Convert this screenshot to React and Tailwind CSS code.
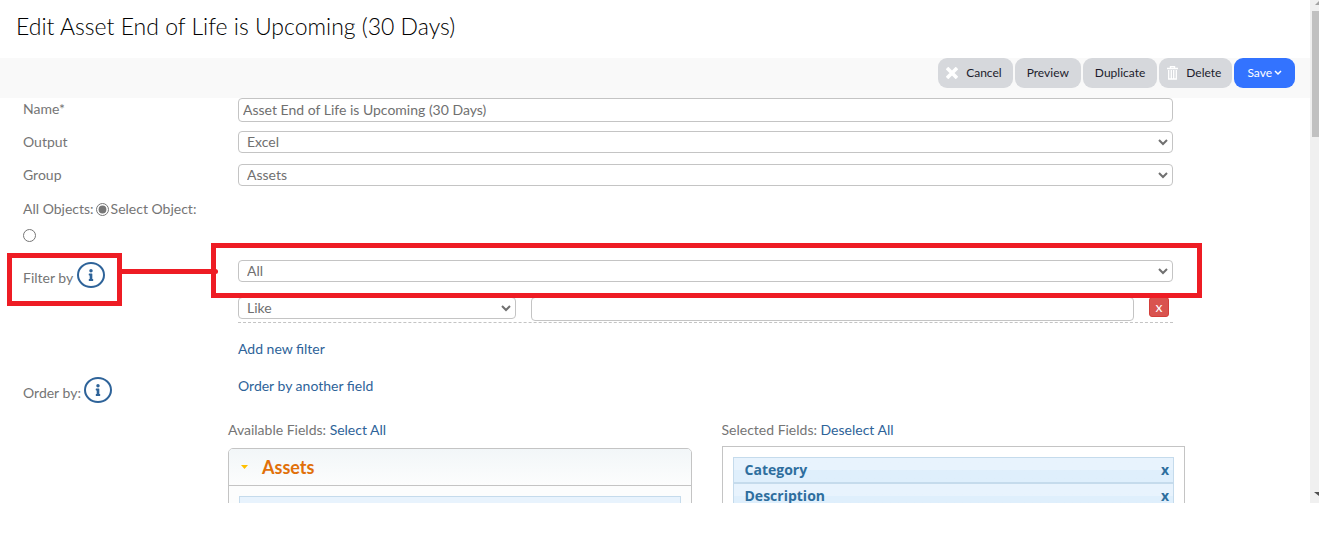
import { useState } from 'react';
import clsx from 'clsx';
import { FaInfo } from 'react-icons/fa';

const SELECTED_FIELDS = ['Category', 'Description'];

function ToolbarButton({ className, children }) {
  return (
    <button
      type="button"
      className={clsx('flex h-[30px] items-center rounded-[9px] text-[12px] leading-none', className)}
    >
      {children}
    </button>
  );
}

function Select({ id, label, value, onChange, options, className }) {
  return (
    <div className={clsx('relative', className)}>
      <select
        id={id}
        aria-label={label}
        value={value}
        onChange={(e) => onChange(e.target.value)}
        className="block h-[22px] w-full appearance-none rounded-[4px] border border-[#c4c4c4] bg-white pl-2 pr-6 text-[14px] leading-5 text-[#707070]"
      >
        {options.map((option) => (
          <option key={option}>{option}</option>
        ))}
      </select>
      <svg
        viewBox="0 0 10 7"
        className="pointer-events-none absolute right-[5px] top-2 h-[7px] w-[10px]"
        fill="none"
        stroke="#707070"
        strokeWidth="2"
      >
        <path d="M1 1l4 4 4-4" />
      </svg>
    </div>
  );
}

function InfoButton({ label }) {
  return (
    <button
      type="button"
      aria-label={label}
      className="flex h-[26px] w-7 items-center justify-center rounded-[50%] border-2 border-[#2e6399] text-[#2e6399]"
    >
      <FaInfo className="size-3" />
    </button>
  );
}

function Radio({ id, checked, onChange }) {
  return (
    <input
      type="radio"
      id={id}
      name="objects"
      checked={checked}
      onChange={onChange}
      className="size-[13px] accent-[#767676]"
    />
  );
}

function Scrollbar() {
  return (
    <div className="flex w-[9px] shrink-0 flex-col justify-between overflow-hidden bg-[#f0f0f0]">
      <div className="flex h-full flex-col">
        <svg viewBox="0 0 9 11" className="h-[11px] w-[9px] shrink-0" fill="#a3a3a3">
          <path d="M5 5l4-4v4z" />
        </svg>
        <div className="ml-[2px] h-[126px] bg-[#c1c1c1]" />
      </div>
      <svg viewBox="0 0 9 11" className="h-[11px] w-[9px] shrink-0" fill="#505050">
        <path d="M4 0h5v4z" />
      </svg>
    </div>
  );
}

export default function App() {
  const [name, setName] = useState('Asset End of Life is Upcoming (30 Days)');
  const [output, setOutput] = useState('Excel');
  const [group, setGroup] = useState('Assets');
  const [scope, setScope] = useState('all');
  const [filterField, setFilterField] = useState('All');
  const [operator, setOperator] = useState('Like');
  const [filterValue, setFilterValue] = useState('');

  return (
    <div className="flex h-screen bg-white pb-[30px] font-['Lato',sans-serif] text-[14px] leading-5 text-[#757575]">
      <main className="min-w-0 flex-1 overflow-hidden">
        <h1 className="h-[58px] pl-4 pt-2 text-[23px] font-light leading-9 text-black">
          Edit Asset End of Life is Upcoming (30 Days)
        </h1>

        {/* Toolbar */}
        <div className="flex h-10 items-start justify-end gap-[2px] bg-[#f9f9f9] pr-[15px] text-[#1c1c2c]">
          <ToolbarButton className="gap-2 bg-[#d6d8dc] pl-2 pr-[11px]">
            <svg viewBox="0 0 12 12" className="size-3" stroke="#fff" strokeWidth="3.6">
              <path d="M1 1l10 10M11 1L1 11" />
            </svg>
            Cancel
          </ToolbarButton>
          <ToolbarButton className="bg-[#d6d8dc] px-3">Preview</ToolbarButton>
          <ToolbarButton className="bg-[#d6d8dc] px-3">Duplicate</ToolbarButton>
          <ToolbarButton className="gap-2 bg-[#d6d8dc] pl-2 pr-[11px]">
            <svg viewBox="0 0 11 14" className="h-[14px] w-[11px]" fill="none" stroke="#fff">
              <path d="M0 2.5h11M3.5 2V.5h4V2" strokeWidth="1.4" />
              <path d="M1.7 4v9h7.6V4M4.3 4v9M6.7 4v9" strokeWidth="1.3" />
            </svg>
            Delete
          </ToolbarButton>
          <ToolbarButton className="gap-[2px] bg-[#3373ff] px-[13px] text-white">
            Save
            <svg viewBox="0 0 8 6" className="h-[6px] w-2" fill="none" stroke="#fff" strokeWidth="1.5">
              <path d="M1 1l3 3 3-3" />
            </svg>
          </ToolbarButton>
        </div>

        <form className="pl-[23px] pr-[137px]">
          <div className="mb-[9px] grid grid-cols-[215px_1fr] items-start">
            <label htmlFor="name" className="pt-px">Name*</label>
            <input
              id="name"
              type="text"
              value={name}
              onChange={(e) => setName(e.target.value)}
              className="h-6 w-full rounded-[4px] border border-[#c4c4c4] px-1 pb-[2px] text-[14px] text-[#707070]"
            />
          </div>
          <div className="mb-[11px] grid grid-cols-[215px_1fr] items-center">
            <label htmlFor="output">Output</label>
            <Select id="output" value={output} onChange={setOutput} options={['Excel', 'PDF', 'CSV']} />
          </div>
          <div className="grid grid-cols-[215px_1fr] items-center">
            <label htmlFor="group">Group</label>
            <Select id="group" value={group} onChange={setGroup} options={['Assets', 'Contracts', 'Users']} />
          </div>

          <div className="flex w-[180px] flex-wrap items-center gap-x-[2px] gap-y-[10px] pb-[18px] pt-[13px]">
            <label htmlFor="all-objects">All Objects:</label>
            <Radio id="all-objects" checked={scope === 'all'} onChange={() => setScope('all')} />
            <label htmlFor="select-object">Select Object:</label>
            <Radio id="select-object" checked={scope === 'one'} onChange={() => setScope('one')} />
          </div>

          {/* Filter */}
          <div className="grid grid-cols-[215px_1fr]">
            <div className="relative h-7">
              <div className="flex items-end gap-1">
                <label htmlFor="filter-field" className="pt-2">Filter by</label>
                <InfoButton label="About filters" />
              </div>
              <div className="pointer-events-none absolute -left-4 -top-[7px] h-[53px] w-[115px] border-[5px] border-[#ee1c24]" />
              <div className="pointer-events-none absolute left-[99px] top-[9px] h-[5px] w-[96px] rounded-r-full bg-[#ee1c24]" />
            </div>
            <div>
              <div className="relative">
                <Select
                  id="filter-field"
                  value={filterField}
                  onChange={setFilterField}
                  options={['All', 'Category', 'Description']}
                />
                <div className="pointer-events-none absolute -bottom-4 -left-[27px] -right-[29px] -top-[17px] z-10 border-[5px] border-[#ee1c24]" />
              </div>
              <div className="mt-[15px] flex items-start border-b border-dashed border-[#c4c4c4] pb-px">
                <Select
                  label="Operator"
                  value={operator}
                  onChange={setOperator}
                  options={['Like', 'Equals', 'Not equal']}
                  className="w-[278px]"
                />
                <input
                  type="text"
                  aria-label="Filter value"
                  value={filterValue}
                  onChange={(e) => setFilterValue(e.target.value)}
                  className="ml-[15px] mr-[15px] h-6 min-w-0 flex-1 rounded-[4px] border border-[#c4c4c4] px-1"
                />
                <button
                  type="button"
                  aria-label="Remove filter"
                  className="mr-1 h-5 w-5 rounded-[3px] border border-[#d43f3a] bg-[#d9534f] text-[14px] leading-4 text-white"
                >
                  x
                </button>
              </div>
              <a href="#add-filter" className="mt-4 block text-[#2e6399]">Add new filter</a>
            </div>
          </div>

          {/* Order */}
          <div className="mt-[17px] grid grid-cols-[215px_1fr] items-start">
            <div className="flex items-end gap-[3px]">
              <span className="pt-[7px]">Order by:</span>
              <InfoButton label="About ordering" />
            </div>
            <a href="#order" className="text-[#2e6399]">Order by another field</a>
          </div>

          {/* Field pickers */}
          <div className="-mr-3 ml-[205px] mt-[17px] grid grid-cols-2 gap-[30px]">
            <section>
              <p>
                Available Fields: <a href="#select-all" className="text-[#2e6399]">Select All</a>
              </p>
              <div className="mt-2 rounded-t-[5px] border border-[#c4c4c4] bg-[#fcfdfd]">
                <h2 className="flex h-[37px] items-center rounded-t-[4px] border-b border-[#c4c4c4] bg-linear-to-b from-[#f2f6f8] to-[#fcfdfd] text-[18px] font-bold text-[#e17009]">
                  <svg viewBox="0 0 7 4" className="ml-3 mr-[14px] h-1 w-[7px]" fill="#ffc000">
                    <path d="M0 0h7L3.500 4z" />
                  </svg>
                  Assets
                </h2>
                <div className="px-[10px] pt-[10px]">
                  <div className="h-[27px] border border-[#c5dbec] bg-[#e8f3fd]" />
                </div>
              </div>
            </section>
            <section>
              <p>
                Selected Fields: <a href="#deselect-all" className="text-[#2e6399]">Deselect All</a>
              </p>
              <ul className="mt-[6px] border border-[#c4c4c4] p-[10px] font-['Open_Sans',sans-serif] font-bold text-[#2e6e9e]">
                {SELECTED_FIELDS.map((field) => (
                  <li
                    key={field}
                    className="flex h-[26px] items-center justify-between border border-[#c5dbec] bg-linear-to-b from-[#e8f3fd] from-50% to-[#dfeffc] to-50% pl-[11px] pr-1"
                  >
                    {field}
                    <button type="button" aria-label={`Remove ${field}`}>x</button>
                  </li>
                ))}
              </ul>
            </section>
          </div>
        </form>
      </main>
      <Scrollbar />
    </div>
  );
}
